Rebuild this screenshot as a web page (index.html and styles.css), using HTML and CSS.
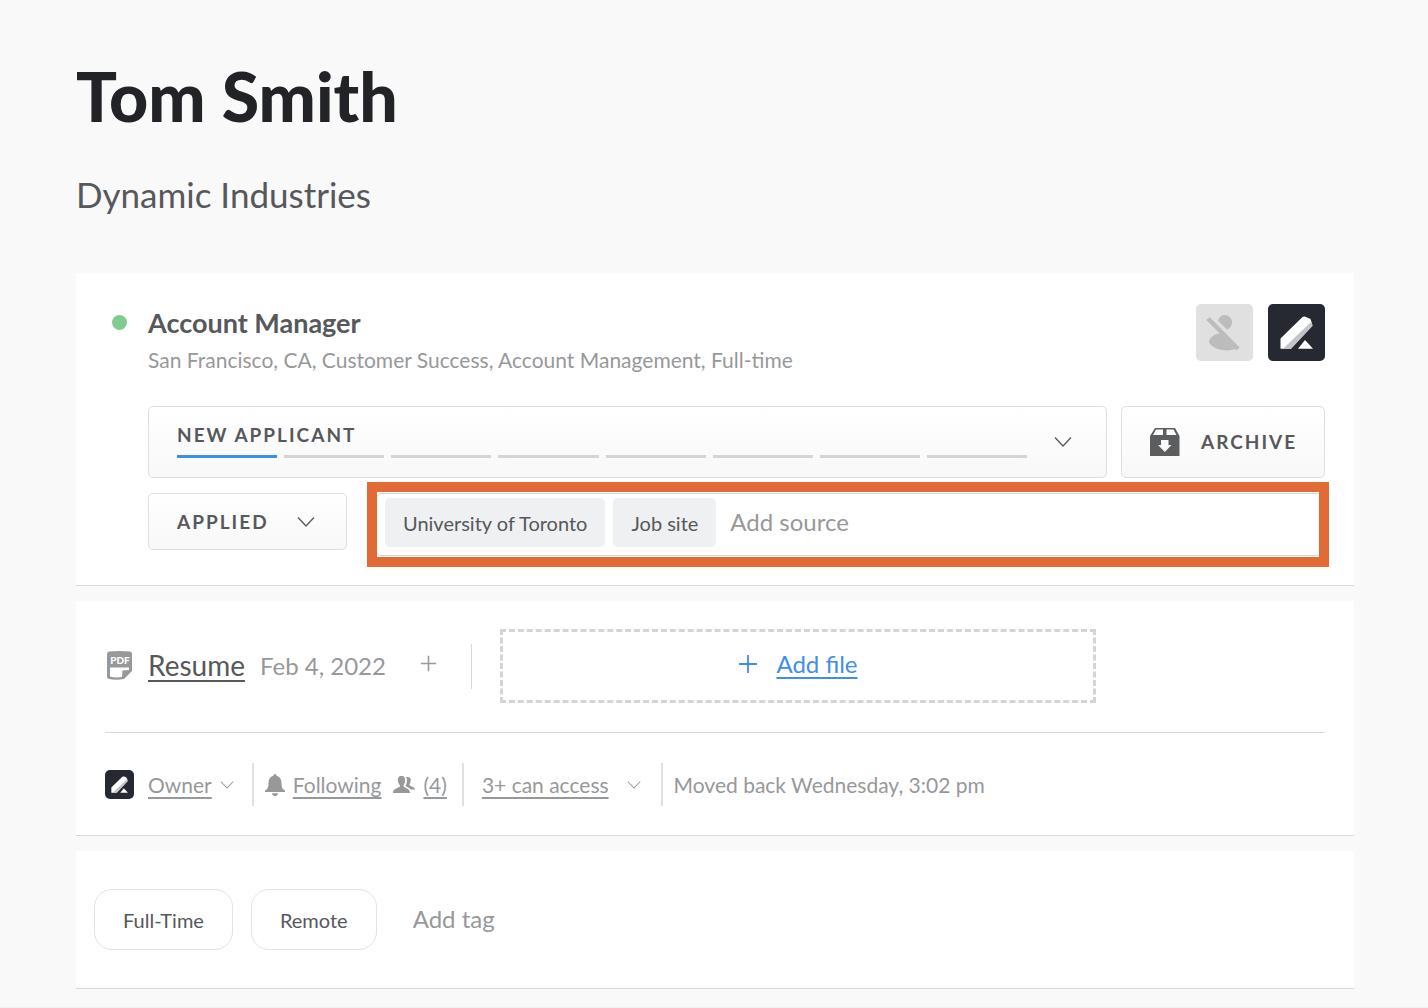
FILE: index.html
```html
<!DOCTYPE html>
<html lang="en">
<head>
<meta charset="utf-8">
<title>Tom Smith</title>
<link rel="stylesheet" href="styles.css">
</head>
<body>
<svg class="defs" aria-hidden="true">
  <symbol id="chevron" viewBox="0 0 18 12"><path d="M1 1.500 9 10 17 1.500" fill="none" stroke="currentColor" stroke-width="1.300"/></symbol>
  <symbol id="plus" viewBox="0 0 20 20"><path d="M10 1V19M1 10H19" fill="none" stroke="currentColor" stroke-width="1.800"/></symbol>
  <symbol id="brand" viewBox="0 0 57 57">
    <rect width="57" height="57" fill="#262932"/>
    <path d="M12.500 34.500 34 13.500Q36 12 38 13L42.500 15 44.500 21.500 23 44.700H12.500Z" fill="#fff"/>
    <path d="M15 44.700 43.500 17.500 44.500 22 23 44.700Z" fill="#c3c4c8"/>
    <path d="M37 36 45 44.700H30Z" fill="#fff"/>
  </symbol>
</svg>
<main class="page">
  <header class="profile">
    <h1 class="name">Tom Smith</h1>
    <p class="company">Dynamic Industries</p>
  </header>

  <section class="card job">
    <div class="job-head">
      <span class="status-dot"></span>
      <div class="job-text">
        <h2 class="job-title">Account Manager</h2>
        <p class="job-meta">San Francisco, CA, Customer Success, Account Management, Full-time</p>
      </div>
      <div class="avatars">
        <svg class="avatar" viewBox="0 0 57 57" role="img" aria-label="Unassigned">
          <rect width="57" height="57" fill="#e0e0e0"/>
          <path d="M22 16.500C23 13 25.500 11 29 11A7.300 7.500 0 0 1 36 18.500C36 21.500 34 24.500 31 25.500Z" fill="#bcbcbc"/>
          <path d="M24 29.500 40 44.500C33 48 20 46.500 15 41Q12 38.500 13.500 35.500C15.500 32 20 29.800 24 29.500Z" fill="#bcbcbc"/>
          <path d="M12 14.500 42 45" stroke="#bcbcbc" stroke-width="4.500"/>
        </svg>
        <svg class="avatar" role="img" aria-label="Owner"><use href="#brand"/></svg>
      </div>
    </div>
    <div class="job-row">
      <button class="btn stage" type="button">
        <span class="stage-main">
          <span class="stage-name">NEW APPLICANT</span>
          <span class="steps"><i class="step done"></i><i class="step"></i><i class="step"></i><i class="step"></i><i class="step"></i><i class="step"></i><i class="step"></i><i class="step"></i></span>
        </span>
        <svg class="chevron"><use href="#chevron"/></svg>
      </button>
      <button class="btn archive" type="button">
        <svg class="archive-icon" viewBox="0 0 30 29" aria-hidden="true">
          <path fill-rule="evenodd" fill="#5b5d5f" d="M5 0H25L29.500 8V28H0V8ZM6 1.500 3 7H13V1.500ZM16.500 1.500V7H26.500L23.500 1.500ZM11 12V17H8L14.800 24 21.500 17H18.500V12Z"/>
        </svg>
        <span>ARCHIVE</span>
      </button>
    </div>
    <div class="job-row">
      <div class="origin">
        <select class="btn origin-select" aria-label="Origin"><option>APPLIED</option></select>
        <svg class="chevron origin-chevron"><use href="#chevron"/></svg>
      </div>
      <div class="sources">
        <span class="chip">University of Toronto</span>
        <span class="chip">Job site</span>
        <input class="ghost-input" type="text" placeholder="Add source" aria-label="Add source">
        <span class="highlight"></span>
      </div>
    </div>
  </section>

  <section class="card details">
    <div class="files">
      <svg class="pdf" viewBox="0 0 25 29" aria-hidden="true">
        <path d="M2 .5Q12 -.5 23 .5Q25 .8 25 3V20L17 28Q9 29.500 2 28Q0 27.700 0 26V3Q0 .8 2 .5Z" fill="#97989a"/>
        <path d="M3 16.500H22V19L15.500 19.500 15 26Q8 27 3 25.500Z" fill="#fff"/>
        <text x="13" y="12.500" class="pdf-text" text-anchor="middle">PDF</text>
      </svg>
      <a class="resume" href="#resume">Resume</a>
      <span class="date">Feb 4, 2022</span>
      <button class="icon-btn" type="button" aria-label="Add version"><svg class="plus-sm"><use href="#plus"/></svg></button>
      <div class="dropzone">
        <svg class="plus"><use href="#plus"/></svg>
        <a class="add-file" href="#add">Add file</a>
      </div>
    </div>
    <div class="activity">
      <div class="group owner">
        <svg class="mini-avatar"><use href="#brand"/></svg>
        <a href="#owner">Owner</a>
        <svg class="chevron-sm"><use href="#chevron"/></svg>
      </div>
      <div class="group following">
        <svg class="bell" viewBox="0 0 20 22" aria-hidden="true"><path d="M10 0C11 0 11.500.8 11.500 1.700C15 2.500 16.500 5.500 16.500 9C16.500 13.500 17.500 15.500 20 16.500V18H0V16.500C2.500 15.500 3.500 13.500 3.500 9C3.500 5.500 5 2.500 8.500 1.700C8.500.8 9 0 10 0ZM7 19.200H13Q12.500 22 10 22T7 19.200Z" fill="#97989a"/></svg>
        <a class="follow" href="#following">Following</a>
        <svg class="people" viewBox="0 0 22 17" aria-hidden="true"><path d="M8.500 0C11.500 0 12.500 2 12 5.500C11.800 8 10.500 8.500 10.500 10C11 12 17 12 17 17H0C0 12 6.500 12 7 10C7 8.500 5.300 8 5 5.500C4.500 2 5.500 0 8.500 0ZM13 1C17 .5 18.500 2 17.500 5.500C17.300 7.500 16.500 8 16.500 9C17 10.500 22 10.500 22 13.500H17.500C16.500 11.500 14 11 12.500 10C12.500 9 14 7.500 14 4.500Q14 2.500 13 1Z" fill="#97989a"/></svg>
        <a href="#followers">(4)</a>
      </div>
      <div class="group access">
        <a href="#access">3+ can access</a>
        <svg class="chevron-sm"><use href="#chevron"/></svg>
      </div>
      <div class="group">Moved back Wednesday, 3:02 pm</div>
    </div>
  </section>

  <section class="card tags">
    <span class="tag">Full-Time</span>
    <span class="tag">Remote</span>
    <input class="ghost-input add-tag" type="text" placeholder="Add tag" aria-label="Add tag">
  </section>
</main>
</body>
</html>
```
FILE: styles.css
```css
* { box-sizing: border-box; }
body {
  margin: 0;
  background: #f9f9f9;
  color: #56585b;
  font-family: Lato, "Open Sans", sans-serif;
  font-size: 20px;
  line-height: 28px;
}
h1, h2, p { margin: 0; }
svg { display: block; flex: none; }
button, select, input { font: inherit; color: inherit; }
.defs { position: absolute; width: 0; height: 0; }
.page { padding: 54px 74px 18px 76px; border-bottom: 1px solid #f2f2f2; }

.profile { height: 219px; }
.name { font-size: 68px; line-height: 84px; font-weight: 900; color: #222326; }
.company { margin-top: 34px; font-size: 35px; line-height: 44px; }

.card {
  margin-bottom: 15px;
  background: #fff;
  border-bottom: 1px solid #d8d8d8;
}

.job { padding: 31px 29px 29px 72px; }
.job-head { display: flex; align-items: flex-start; margin-left: -36px; }
.status-dot {
  width: 15px;
  height: 15px;
  margin: 11px 21px 0 0;
  border-radius: 50%;
  background: #7fcc8e;
}
.job-text { flex: 1; height: 102px; }
.job-title { font-size: 27px; line-height: 38px; font-weight: 700; }
.job-meta { margin-top: 4px; font-size: 21px; color: #97989a; }
.avatars { display: flex; gap: 15px; }
.avatar { width: 57px; height: 57px; border-radius: 5px; }

.job-row { display: flex; align-items: flex-start; gap: 14px; }
.job-row + .job-row { gap: 29px; margin-top: 15px; }
.btn {
  border: 1px solid #dfdfe0;
  border-radius: 5px;
  background: linear-gradient(#fff, #f8f8f8);
  font-size: 19px;
  font-weight: 700;
  letter-spacing: 2px;
}
.stage {
  display: flex;
  flex: 1;
  align-items: center;
  gap: 27px;
  height: 72px;
  padding: 0 34px 0 28px;
}
.stage-main { flex: 1; padding-bottom: 6px; text-align: left; }
.stage-name { display: block; line-height: 28px; }
.steps { display: flex; gap: 7px; margin-top: 6px; }
.step { flex: 1; height: 3px; background: #d5d5d6; }
.step.done { background: #3f8fea; }
.chevron { width: 18px; height: 12px; }
.archive {
  display: flex;
  align-items: center;
  gap: 21px;
  width: 204px;
  height: 72px;
  padding: 0 0 0 28px;
}
.archive-icon { width: 30px; height: 29px; }

.origin { position: relative; width: 199px; }
.origin-select {
  appearance: none;
  width: 100%;
  height: 57px;
  padding: 0 28px;
}
.origin-chevron { position: absolute; right: 32px; top: 23px; pointer-events: none; }
.sources {
  position: relative;
  display: flex;
  flex: 1;
  gap: 8px;
  height: 63px;
  padding: 4px 8px;
  border: 1px solid #d5d6d8;
  border-radius: 5px;
}
.chip {
  height: 49px;
  padding: 0 18px;
  border-radius: 5px;
  background: #eff0f2;
  line-height: 50px;
}
.ghost-input {
  flex: 1;
  min-width: 0;
  height: 49px;
  padding: 0 6px 2px;
  border: 0;
  background: none;
  outline: 0;
  font-size: 24px;
}
.ghost-input::placeholder { color: #97989a; opacity: 1; }
.highlight {
  position: absolute;
  inset: -12px -5px -12px -10px;
  border: 10px solid #e26b35;
  pointer-events: none;
}

.details { padding: 28px 29px; color: #97989a; }
.details a { color: inherit; text-decoration-thickness: 2px; text-underline-offset: 4px; text-decoration-skip-ink: none; }
.files { display: flex; align-items: center; padding-bottom: 29px; border-bottom: 1px solid #d8d8d8; }
.pdf { width: 25px; height: 29px; margin: 0 16px 2px 2px; }
.pdf-text { font: 900 10px Lato, sans-serif; fill: #fff; }
.files .resume { padding-bottom: 2px; font-size: 28px; line-height: 36px; color: #56585b; }
.date { margin-left: 15px; font-size: 24px; }
.icon-btn {
  display: flex;
  align-items: center;
  height: 45px;
  margin-left: 34px;
  padding: 0 34px 6px 0;
  border: 0;
  border-right: 1px solid #d8d8d8;
  background: none;
}
.plus-sm { width: 17px; height: 17px; }
.dropzone {
  display: flex;
  flex: 0 1 596px;
  align-items: center;
  justify-content: center;
  gap: 18px;
  height: 74px;
  margin-left: 28px;
  padding-bottom: 4px;
  border: 3px dashed #d5d5d6;
  color: #3f8fea;
}
.plus { width: 20px; height: 20px; }
.add-file { font-size: 24px; }

.activity { display: flex; align-items: center; padding: 30px 0 1px; font-size: 21px; }
.group { display: flex; align-items: center; height: 43px; }
.group + .group { padding-left: 11px; border-left: 2px solid #e0e0e0; }
.mini-avatar { width: 29px; height: 29px; margin-right: 14px; border-radius: 5px; }
.chevron-sm { width: 14px; height: 10px; margin-left: 8px; }
.owner { padding-right: 18px; }
.bell { width: 20px; height: 22px; margin-right: 8px; }
.people { width: 22px; height: 17px; margin: 0 8px 0 12px; }
.following { padding-right: 15px; }
.group.access { padding: 0 20px 0 18px; }
.access .chevron-sm { margin-left: 18px; }

.tags { display: flex; gap: 18px; padding: 38px 18px; margin-bottom: 0; }
.tag {
  height: 61px;
  padding: 0 28px;
  border: 1px solid #e3e3e4;
  border-radius: 18px;
  line-height: 61px;
}
.add-tag { height: 61px; padding: 0 18px 2px; }
```
